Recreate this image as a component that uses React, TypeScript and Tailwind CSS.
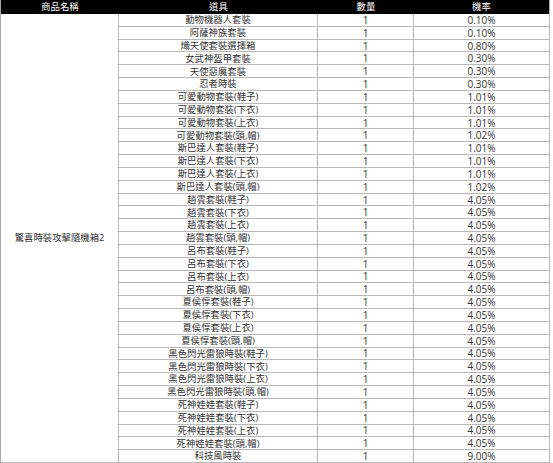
const ITEMS: [string, string][] = [
  ['動物機器人套裝', '0.10%'],
  ['阿薩神族套裝', '0.10%'],
  ['熾天使套裝選擇箱', '0.80%'],
  ['女武神盔甲套裝', '0.30%'],
  ['天使惡魔套裝', '0.30%'],
  ['忍者時裝', '0.30%'],
  ['可愛動物套裝(鞋子)', '1.01%'],
  ['可愛動物套裝(下衣)', '1.01%'],
  ['可愛動物套裝(上衣)', '1.01%'],
  ['可愛動物套裝(頭,帽)', '1.02%'],
  ['斯巴達人套裝(鞋子)', '1.01%'],
  ['斯巴達人套裝(下衣)', '1.01%'],
  ['斯巴達人套裝(上衣)', '1.01%'],
  ['斯巴達人套裝(頭,帽)', '1.02%'],
  ['趙雲套裝(鞋子)', '4.05%'],
  ['趙雲套裝(下衣)', '4.05%'],
  ['趙雲套裝(上衣)', '4.05%'],
  ['趙雲套裝(頭,帽)', '4.05%'],
  ['呂布套裝(鞋子)', '4.05%'],
  ['呂布套裝(下衣)', '4.05%'],
  ['呂布套裝(上衣)', '4.05%'],
  ['呂布套裝(頭,帽)', '4.05%'],
  ['夏侯惇套裝(鞋子)', '4.05%'],
  ['夏侯惇套裝(下衣)', '4.05%'],
  ['夏侯惇套裝(上衣)', '4.05%'],
  ['夏侯惇套裝(頭,帽)', '4.05%'],
  ['黑色閃光雷狼時裝(鞋子)', '4.05%'],
  ['黑色閃光雷狼時裝(下衣)', '4.05%'],
  ['黑色閃光雷狼時裝(上衣)', '4.05%'],
  ['黑色閃光雷狼時裝(頭,帽)', '4.05%'],
  ['死神娃娃套裝(鞋子)', '4.05%'],
  ['死神娃娃套裝(下衣)', '4.05%'],
  ['死神娃娃套裝(上衣)', '4.05%'],
  ['死神娃娃套裝(頭,帽)', '4.05%'],
  ['科技風時裝', '9.00%'],
]

const cell = 'flex items-center justify-center border-r border-b border-[#b8b8b8] leading-none'

export default function App() {
  return (
    <div className="h-[463px] w-[553px] bg-white text-[#333] [font-family:'Open_Sans','Noto_Sans_CJK_TC',sans-serif]">
      <div className="grid h-[463px] w-[550px] grid-cols-[118px_199px_96px_136px] grid-rows-[14px_repeat(35,minmax(0,1fr))] border-l border-[#a8a8a8] text-[9.4px]">
        {/* 標題列 */}
        <div className="flex items-center justify-center bg-black text-white">商品名稱</div>
        <div className="flex items-center justify-center bg-black text-white">道具</div>
        <div className="flex items-center justify-center bg-black text-white">數量</div>
        <div className="flex items-center justify-center border-r border-[#a8a8a8] bg-black text-white">機率</div>

        <div className={`${cell} row-span-35 border-[#a0a0a0]`}>驚喜時裝攻擊隨機箱2</div>
        {ITEMS.map(([name, rate]) => (
          <div key={name} className="contents">
            <div className={cell}>{name}</div>
            <div className={`${cell} text-[10px]`}>1</div>
            <div className={`${cell} text-[10px]`}>{rate}</div>
          </div>
        ))}
      </div>
    </div>
  )
}
